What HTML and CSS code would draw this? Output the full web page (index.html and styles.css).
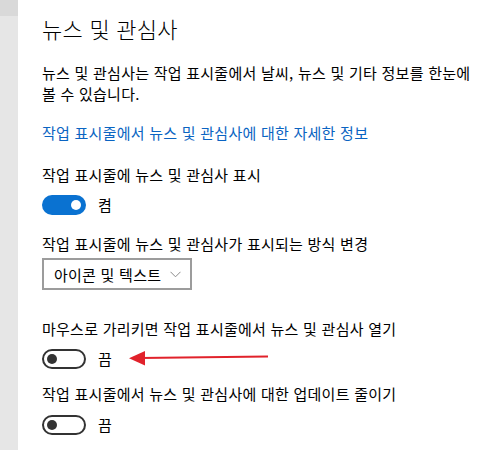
FILE: index.html
```html
<!DOCTYPE html>
<html lang="ko">
  <head>
    <meta charset="UTF-8" />
    <meta name="viewport" content="width=device-width, initial-scale=1.0" />
    <title>뉴스 및 관심사</title>
    <link rel="stylesheet" href="styles.css">
  </head>
  <body>
    <div class="sidebar">
      <div class="sidebar-top"></div>
    </div>

    <div class="main">
      <h1 class="title">뉴스 및 관심사</h1>

      <p class="desc">
        뉴스 및 관심사는 작업 표시줄에서 날씨, 뉴스 및 기타 정보를 한눈에 볼 수 있습니다.
      </p>

      <a href="#" class="info-link">작업 표시줄에서 뉴스 및 관심사에 대한 자세한 정보</a>

      <div class="setting first">
        <div class="label">작업 표시줄에 뉴스 및 관심사 표시</div>
        <div class="toggle-row">
          <span class="toggle on"><span class="knob"></span></span>
          <span class="state">켬</span>
        </div>
      </div>

      <div class="setting second">
        <div class="label">작업 표시줄에 뉴스 및 관심사가 표시되는 방식 변경</div>
        <div class="dropdown">
          <span>아이콘 및 텍스트</span>
          <svg class="chevron" width="11" height="7" viewBox="0 0 11 7">
            <path d="M0.5 0.8 L5.5 5.8 L10.5 0.8" fill="none" stroke="#8a8a8a" stroke-width="1" />
          </svg>
        </div>
      </div>

      <div class="setting third">
        <div class="label">마우스로 가리키면 작업 표시줄에서 뉴스 및 관심사 열기</div>
        <div class="toggle-row">
          <span class="toggle off"><span class="knob"></span></span>
          <span class="state">끔</span>
        </div>
      </div>

      <div class="setting fourth">
        <div class="label">작업 표시줄에서 뉴스 및 관심사에 대한 업데이트 줄이기</div>
        <div class="toggle-row">
          <span class="toggle off"><span class="knob"></span></span>
          <span class="state">끔</span>
        </div>
      </div>

      <!-- red annotation arrow drawn over the page -->
      <svg class="arrow" width="484" height="450" viewBox="0 0 484 450">
        <line x1="268" y1="356.5" x2="140" y2="358" stroke="#e1222b" stroke-width="2" />
        <polygon points="129,358.2 145,351 145,365.5" fill="#e1222b" />
      </svg>
    </div>
  </body>
</html>
```

FILE: styles.css
```css
html,
body {
  height: 100%;
  overflow: hidden;
}

body {
  margin: 0;
  padding: 0;
  display: flex;
  background-color: #ffffff;
  font-family: "Noto Sans CJK KR", "Noto Sans", sans-serif;
  font-size: 15px;
  letter-spacing: 0.25px;
  color: #000000;
}

.sidebar {
  width: 18px;
  flex-shrink: 0;
  background-color: #e6e6e6;
}

.sidebar-top {
  height: 16px;
  background-color: #d9d9d9;
}

.main {
  flex: 1;
  padding: 0 10px 0 24px;
}

.title {
  margin: 14px 0 0;
  font-size: 22px;
  font-weight: 300;
  line-height: 28px;
}

.desc {
  margin: 20px 0 0;
  line-height: 21px;
}

.info-link {
  display: block;
  margin-top: 19px;
  line-height: 20px;
  color: #0a64c2;
  text-decoration: none;
}

.label {
  line-height: 20px;
}

.setting.first {
  margin-top: 22px;
}

.setting.second {
  margin-top: 19px;
}

.setting.third {
  margin-top: 29px;
}

.setting.fourth {
  margin-top: 15px;
}

.toggle-row {
  display: flex;
  align-items: center;
  margin-top: 10px;
}

.setting.fourth .toggle-row {
  margin-top: 11px;
}

.toggle {
  box-sizing: border-box;
  width: 44px;
  height: 20px;
  border-radius: 10px;
  display: flex;
  align-items: center;
  padding: 0 5px;
}

.toggle .knob {
  width: 10px;
  height: 10px;
  border-radius: 50%;
}

.toggle.on {
  background-color: #0a72d1;
  justify-content: flex-end;
}

.toggle.on .knob {
  background-color: #ffffff;
}

.toggle.off {
  border: 2px solid #333333;
  padding: 0 3px;
}

.toggle.off .knob {
  background-color: #333333;
}

.state {
  margin-left: 12px;
  line-height: 20px;
}

.dropdown {
  box-sizing: border-box;
  width: 150px;
  height: 32px;
  margin-top: 4px;
  border: 2px solid #9c9c9c;
  display: flex;
  align-items: center;
  justify-content: space-between;
  padding: 0 9px 0 10px;
}

.arrow {
  position: absolute;
  left: 0;
  top: 0;
  pointer-events: none;
}
```
